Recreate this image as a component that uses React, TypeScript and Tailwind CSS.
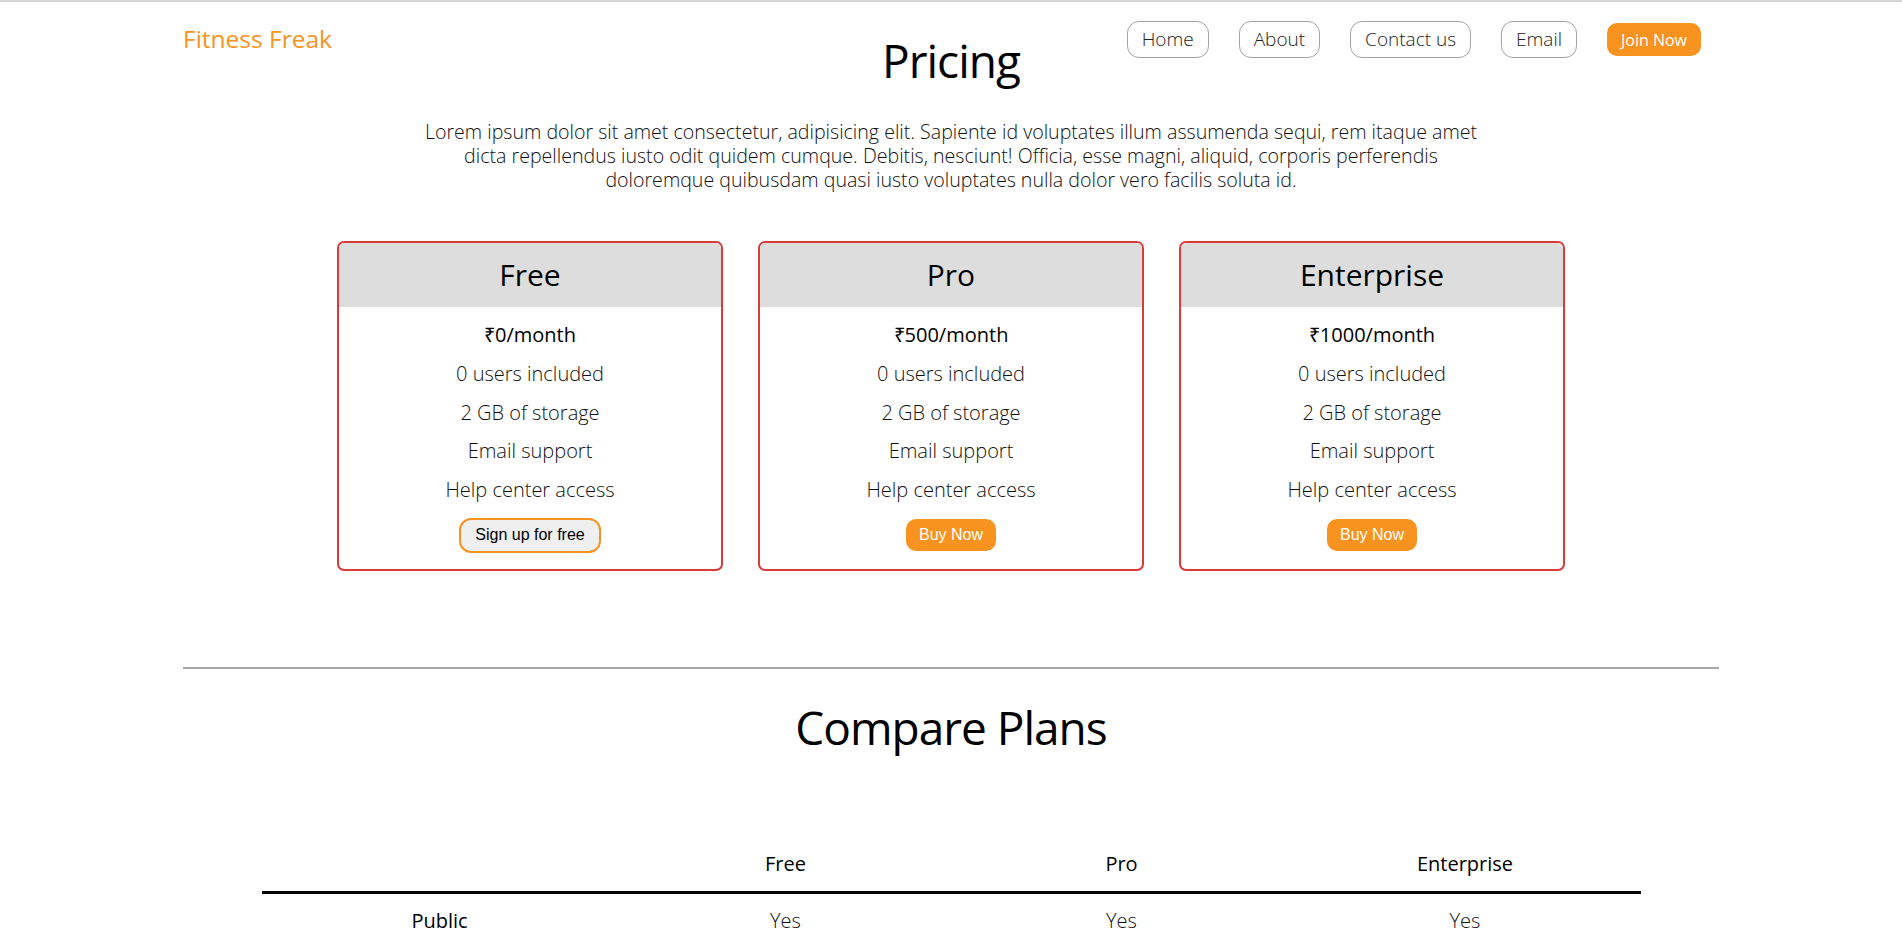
import React from 'react';

const plans = [
  { name: 'Free', price: '₹0/month', cta: 'Sign up for free', outline: true },
  { name: 'Pro', price: '₹500/month', cta: 'Buy Now', outline: false },
  { name: 'Enterprise', price: '₹1000/month', cta: 'Buy Now', outline: false },
];

const features = ['0 users included', '2 GB of storage', 'Email support', 'Help center access'];

const navLinks = ['Home', 'About', 'Contact us', 'Email'];

function PlanCard({ plan }: { plan: (typeof plans)[number] }) {
  return (
    <div className="w-[386px] overflow-hidden rounded-[7px] border-2 border-[#db3a3a]">
      <div className="flex h-[64px] items-center justify-center bg-[#dddddd]">
        <h2 className="text-[30px] leading-[40px] font-normal text-black">{plan.name}</h2>
      </div>
      <ul className="flex flex-col items-center pt-[9px] text-[20px] leading-[38.75px] font-light text-[#111]">
        <li className="font-medium text-black">{plan.price}</li>
        {features.map((f) => (
          <li key={f}>{f}</li>
        ))}
      </ul>
      <div className="mt-[8px] mb-[16px] flex h-[35px] items-center justify-center font-['Liberation_Sans',Arial,sans-serif] text-[16px]">
        {plan.outline ? (
          <button className="h-[35px] rounded-[12px] border-2 border-[#f7931e] bg-[#efefef] px-[14px] text-black">
            {plan.cta}
          </button>
        ) : (
          <button className="h-[32px] rounded-[10px] bg-[#f7931e] px-[13px] text-white">{plan.cta}</button>
        )}
      </div>
    </div>
  );
}

export default function App() {
  return (
    <div className="min-h-screen overflow-hidden border-t-2 border-[#d4d4d4] bg-white font-['Open_Sans',sans-serif] text-[#111]">
      <header className="mx-auto grid w-[1536px] grid-cols-[1fr_auto_1fr] items-start">
        <a href="#" className="mt-[21px] justify-self-start text-[24.5px] leading-[32px] text-[#f7931e]">
          Fitness Freak
        </a>
        <h1 className="mt-[30px] text-[46px] leading-[56px] font-normal tracking-[-1px] text-black">Pricing</h1>
        <nav className="mt-[19px] flex items-center justify-self-end gap-[30px] pr-[18px]">
          {navLinks.map((l) => (
            <a
              key={l}
              href="#"
              className="flex h-[37px] items-center rounded-[12px] border border-[#a3a3a3] px-[14px] text-[19px] font-light text-[#222]"
            >
              {l}
            </a>
          ))}
          <button className="h-[33px] rounded-[10px] bg-[#f7931e] px-[14px] text-[16px] text-white">Join Now</button>
        </nav>
      </header>

      <p className="mx-auto mt-[32px] w-[1080px] text-center text-[19.6px] leading-[24px] font-light text-[#111]">
        Lorem ipsum dolor sit amet consectetur, adipisicing elit. Sapiente id voluptates illum assumenda sequi, rem
        itaque amet dicta repellendus iusto odit quidem cumque. Debitis, nesciunt! Officia, esse magni, aliquid,
        corporis perferendis doloremque quibusdam quasi iusto voluptates nulla dolor vero facilis soluta id.
      </p>

      <section className="mt-[49px] flex justify-center gap-[35px]">
        {plans.map((p) => (
          <PlanCard key={p.name} plan={p} />
        ))}
      </section>

      <div className="mx-auto mt-[96px] h-[2px] w-[1536px] bg-[#a6a6a6]" />

      <h1 className="mt-[30px] text-center text-[46px] leading-[56px] font-normal tracking-[-1px] text-black">
        Compare Plans
      </h1>

      <div className="mx-auto mt-[97px] w-[1379px] text-[20px] leading-[24px]">
        <div className="grid grid-cols-[356px_336px_336px_351px] border-b-[3px] border-black pb-[15px] text-center font-normal text-black">
          <div />
          <div>Free</div>
          <div>Pro</div>
          <div>Enterprise</div>
        </div>
        <div className="grid grid-cols-[356px_336px_336px_351px] pt-[15px] text-center font-light">
          <div className="font-normal text-black">Public</div>
          <div>Yes</div>
          <div>Yes</div>
          <div>Yes</div>
        </div>
      </div>
    </div>
  );
}
